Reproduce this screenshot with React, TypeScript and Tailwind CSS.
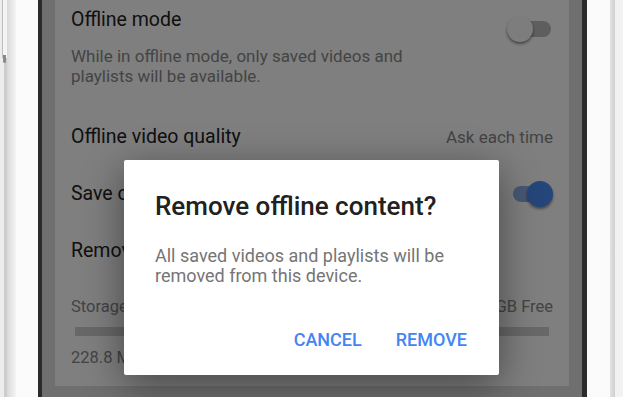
import React from 'react';

const font = { fontFamily: 'Roboto, "Noto Sans", Arial, sans-serif' };

// interruptor de la lista de ajustes
const Toggle = ({ on }: { on: boolean }) => (
  <div className="relative w-[48px] h-[26px] shrink-0">
    <div className={`absolute left-[8px] right-[2px] top-[5px] h-[16px] rounded-full ${on ? 'bg-[#8fb0e8]' : 'bg-[#bdbdbd]'}`} />
    <div
      className={`absolute top-0 w-[26px] h-[26px] rounded-full shadow-[0_2px_3px_rgba(0,0,0,0.45)] ${on ? 'right-[0px] bg-[#4a8cf5]' : 'left-[2px] bg-[#fafafa]'}`}
    />
  </div>
);

const Row = ({ title, right }: { title: string; right?: React.ReactNode }) => (
  <div className="h-[57px] flex items-center justify-between px-4">
    <span className="text-[19.5px] leading-[24px] text-[#222]">{title}</span>
    {right}
  </div>
);

export default function App() {
  return (
    <div className="w-[623px] h-[397px] flex overflow-hidden bg-white" style={font}>
      {/* marco izquierdo del teléfono */}
      <div className="relative w-[38px] h-full flex shrink-0">
        <div className="w-[4px] bg-[#ededed]" />
        <div className="w-[3px] bg-[#cdcdcd]" />
        <div className="w-[9px] bg-gradient-to-r from-[#d9d9d9] to-[#f4f4f4]" />
        <div className="flex-1 bg-[#fbfbfb]" />
        <div className="absolute left-[2px] top-0 w-[5px] h-[58px] bg-[#f4f4f4] border-l border-[#bdbdbd]" />
        <div className="absolute left-[3px] top-[55px] w-[3px] h-[8px] bg-[#8a8a8a] rounded-b-sm" />
      </div>
      <div className="w-[4px] h-full bg-[#2b2b2b] shrink-0" />

      {/* pantalla */}
      <div className="relative flex-1 h-full bg-[#dedede] overflow-hidden">
        <div className="mx-[13px] h-[386px] bg-white flex flex-col">
          <div className="h-[108px] flex justify-between px-4 pt-[8px]">
            <div>
              <div className="text-[19.5px] leading-[24px] text-[#222]">Offline mode</div>
              <p className="mt-[14px] text-[17px] leading-[20px] text-[#888]">
                While in offline mode, only saved videos and
                <br />
                playlists will be available.
              </p>
            </div>
            <div className="mt-[8px]">
              <Toggle on={false} />
            </div>
          </div>
          <Row
            title="Offline video quality"
            right={<span className="text-[17px] leading-[20px] text-[#888]">Ask each time</span>}
          />
          <Row title="Save offline to SD card" right={<Toggle on />} />
          <Row title="Remove offline content" />
          <div className="flex-1 px-4 pt-[18px] bg-white">
            <div className="flex justify-between text-[16.5px] leading-[20px] text-[#888]">
              <span>Storage</span>
              <span>10.4 GB Free</span>
            </div>
            <div className="mx-[4px] mt-[10px] h-[9px] bg-[#d0d0d0]" />
            <div className="mt-[12px] text-[16.5px] leading-[20px] text-[#888]">228.8 MB used</div>
          </div>
        </div>

        {/* velo del diálogo */}
        <div className="absolute inset-0 bg-black/50" />

        <div className="absolute left-[82px] top-[160px] w-[375px] h-[215px] bg-white rounded-[2px] shadow-[0_10px_40px_rgba(0,0,0,0.45)] pl-[31px] pt-[30px]">
          <h2 className="text-[26px] leading-[32px] font-medium text-[#212121]">Remove offline content?</h2>
          <p className="mt-[24px] text-[18px] leading-[20px] text-[#757575]">
            All saved videos and playlists will be
            <br />
            removed from this device.
          </p>
          <div className="mt-[44px] flex justify-end gap-[34px] pr-[32px] text-[18px] leading-[20px] font-medium text-[#4285f4]">
            <button>CANCEL</button>
            <button>REMOVE</button>
          </div>
        </div>
      </div>

      {/* marco derecho */}
      <div className="w-[5px] h-full bg-[#2b2b2b] shrink-0" />
      <div className="w-[36px] h-full flex shrink-0">
        <div className="w-[23px] bg-[#fbfbfb]" />
        <div className="w-[5px] bg-gradient-to-r from-[#e2e2e2] to-[#cfcfcf]" />
        <div className="flex-1 bg-[#f2f2f2]" />
      </div>
    </div>
  );
}
